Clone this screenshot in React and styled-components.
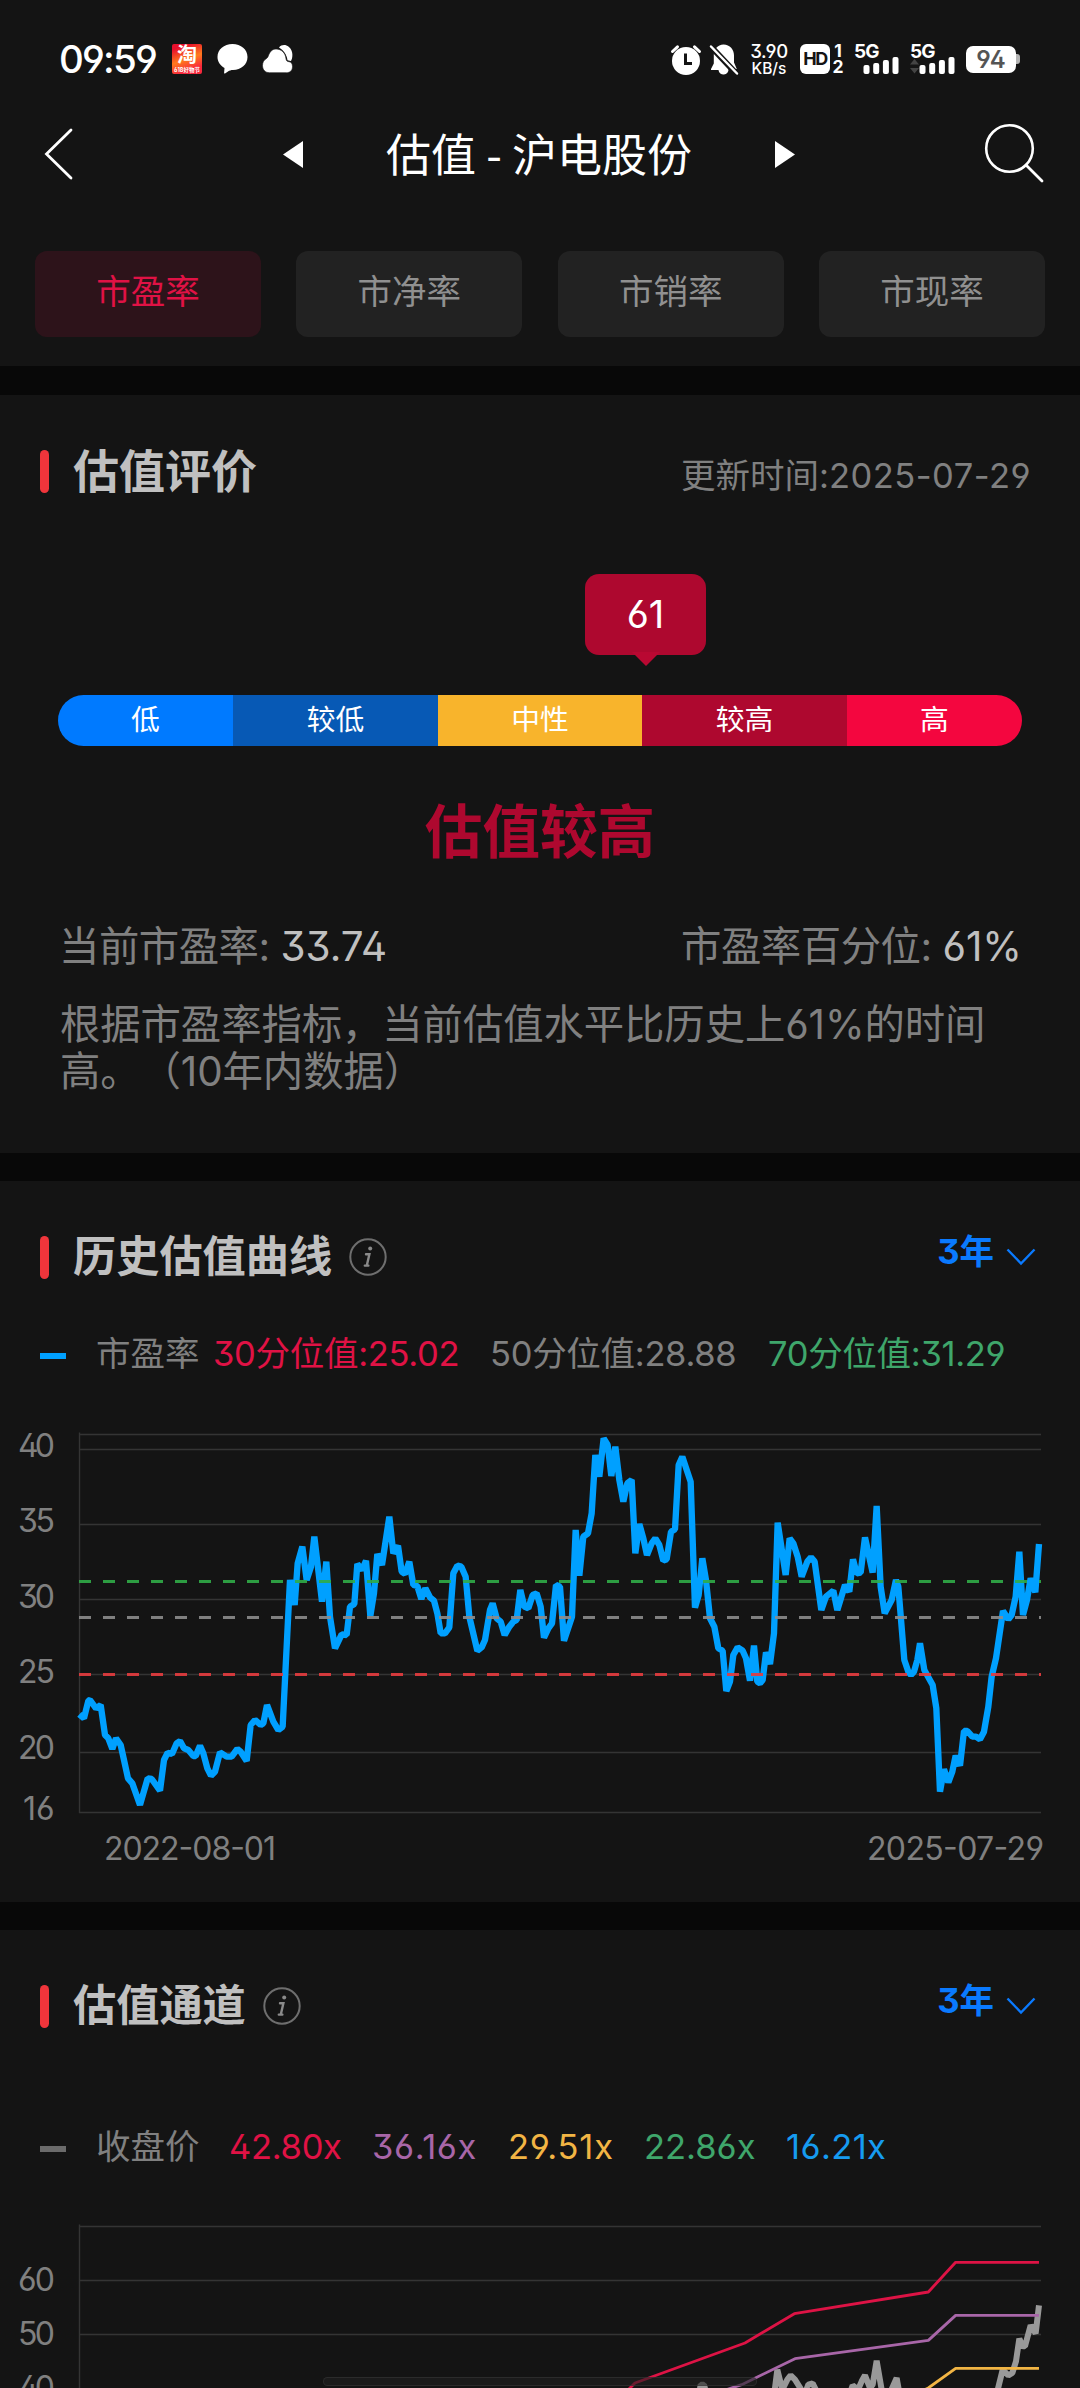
import React from "react";
import styled, { createGlobalStyle } from "styled-components";

const GlobalStyle = createGlobalStyle`
  * {
    box-sizing: border-box;
  }
  body {
    margin: 0;
    background: #141414;
    font-family: "Inter", "Noto Sans CJK SC", sans-serif;
    font-feature-settings: "ss01", "cv03", "cv04";
    text-spacing-trim: space-all;
  }
  svg {
    display: block;
    flex-shrink: 0;
    overflow: visible;
  }
`;

const tabs = ["市盈率", "市净率", "市销率", "市现率"];

const levels = [
  { name: "低", color: "#007aff", width: 175 },
  { name: "较低", color: "#0759b5", width: 205 },
  { name: "中性", color: "#f8b42c", width: 204 },
  { name: "较高", color: "#ae082f", width: 205 },
  { name: "高", color: "#f4063f", width: 175 },
];

const quantiles = [
  { text: "30分位值:25.02", color: "#e01245", width: 277 },
  { text: "50分位值:28.88", color: "#808080", width: 278 },
  { text: "70分位值:31.29", color: "#3fa66b", width: 240 },
];

const multiples = [
  { text: "42.80x", color: "#e01245", width: 143, spacing: -0.3 },
  { text: "36.16x", color: "#a866a8", width: 136, spacing: 0.6 },
  { text: "29.51x", color: "#f2b544", width: 136, spacing: 0.8 },
  { text: "22.86x", color: "#3fa66b", width: 142, spacing: 0 },
  { text: "16.21x", color: "#169bf0", width: 100, spacing: 0.4 },
];

// chart samples, three units to a pixel
const peTrend = `238,943 252,955 265,902 270,900 288,925 302,915 315,1005 325,1015 337,1047 348,1015 362,1035
372,1080 384,1135 397,1150 420,1215 443,1135 455,1137 480,1172 492,1080 503,1058 516,1062 530,1030 540,1023 552,1045
565,1050 580,1068 587,1068 600,1037 610,1060 622,1105 633,1127 645,1115 660,1057 680,1070 695,1070 712,1047 722,1055
740,1083 752,975 765,960 782,975 790,970 801,915 820,965 835,990 848,980 870,540 884,615 893,490 907,440 920,540
933,500 943,410 966,605 979,485 990,650 1005,745 1025,703 1040,705 1050,620 1063,612 1072,492 1086,510 1098,482
1111,648 1122,580 1132,462 1146,495 1168,350 1180,460 1194,437 1205,515 1215,522 1228,485 1240,555 1252,558
1264,597 1276,565 1290,592 1302,602 1312,640 1322,700 1335,700 1348,682 1360,520 1372,497 1384,500 1397,530
1408,650 1432,752 1445,742 1455,720 1470,630 1478,610 1490,655 1502,665 1514,705 1528,680 1540,665 1550,660
1561,570 1573,620 1585,625 1598,585 1610,580 1622,620 1632,713 1645,685 1656,670 1668,555 1680,560 1692,722
1716,650 1727,390 1738,527 1750,410 1764,400 1775,340 1786,165 1798,230 1811,115 1823,135 1834,228 1846,140
1858,240 1870,305 1882,250 1895,240 1906,460 1918,372 1930,415 1941,465 1955,430 1966,415 1978,435 1990,482
2000,478 2013,395 2025,388 2036,195 2047,170 2072,245 2085,623 2096,585 2107,475 2118,540 2130,655 2143,680
2155,745 2168,752 2179,873 2190,845 2200,765 2213,742 2228,752 2238,775 2250,842 2262,737 2272,845 2280,850
2288,840 2298,757 2310,792 2322,700 2333,368 2357,525 2369,415 2380,430 2393,470 2405,530 2422,485 2433,472
2444,485 2464,630 2478,590 2500,572 2512,630 2535,555 2548,575 2559,478 2570,520 2582,518 2595,412 2618,518
2630,318 2642,560 2654,640 2675,600 2688,540 2695,560 2713,780 2725,815 2733,825 2742,815 2752,780 2760,730
2773,810 2798,855 2809,925 2820,1175 2832,1108 2845,1147 2857,1115 2867,1067 2880,1097 2892,993 2902,993
2917,1010 2928,1010 2940,1018 2952,995 2965,920 2975,830 2988,775 3009,633 3025,658 3035,645 3047,590 3058,455
3069,645 3081,600 3092,535 3106,577 3117,432`;

const closePrice = `1680,720 2080,720 2102,590 2112,590 2125,640 2320,640 2332,545 2347,605 2362,575 2372,562 2385,575
2402,602 2412,625 2425,590 2438,586 2450,610 2460,660 2540,640 2552,610 2558,592 2568,600 2575,603 2585,580
2595,562 2610,600 2618,590 2630,518 2645,605 2655,625 2670,615 2690,570 2700,625 2760,700 2980,660 2992,610
3008,545 3025,562 3037,555 3048,520 3058,452 3068,475 3075,475 3092,412 3107,436 3117,352`;

const bands = [
  { color: "#f2b544", points: "2700,640 2785,600 2867,541 3117,541" },
  {
    color: "#a866a8",
    points: "2140,618 2225,590 2260,573 2385,512 2785,457 2867,382 3117,382",
  },
  {
    color: "#dd1345",
    points: "1870,620 1905,585 2235,465 2383,377 2785,312 2867,223 3117,223",
  },
];

const Line = (props) => (
  <polyline
    transform="scale(0.33333)"
    fill="none"
    strokeLinejoin="bevel"
    {...props}
  />
);

const Grid = ({ rows, bottom }) => (
  <g stroke="#343434" strokeWidth="1.4">
    {rows.map((y) => (
      <line key={y} x1="79" x2="1041" y1={y} y2={y} />
    ))}
    <line x1="79.5" x2="79.5" y1={rows[0] - 2} y2={bottom} />
  </g>
);

const AxisLabel = ({ y, children }) => (
  <AxisText x="18" y={y + 11} textLength="37">
    {children}
  </AxisText>
);

const HistoryChart = () => (
  <svg width="1080" height="500">
    <Grid rows={[34.5, 49.5, 124.5, 199.5, 274.5, 352.5, 412.5]} bottom={413} />
    <AxisLabel y={46}>40</AxisLabel>
    <AxisLabel y={121}>35</AxisLabel>
    <AxisLabel y={197}>30</AxisLabel>
    <AxisLabel y={272}>25</AxisLabel>
    <AxisLabel y={348}>20</AxisLabel>
    <AxisText x="23" y="420" textLength="31.5">
      16
    </AxisText>
    <Line points={peTrend} stroke="#00a0ff" strokeWidth="19" />
    <g strokeWidth="3" strokeDasharray="12 12" opacity="0.9">
      <line x1="79" x2="1041" y1="181.5" y2="181.5" stroke="#30ac48" />
      <line x1="79" x2="1041" y1="217.5" y2="217.5" stroke="#8c8c8c" />
      <line x1="79" x2="1041" y1="274.5" y2="274.5" stroke="#e63c3f" />
    </g>
    <AxisText x="104" y="460" textLength="172">
      2022-08-01
    </AxisText>
    <AxisText x="867" y="460" textLength="177">
      2025-07-29
    </AxisText>
  </svg>
);

const ChannelChart = () => (
  <svg width="1080" height="200">
    <Grid rows={[38.5, 92.5, 146.5]} bottom={200} />
    <AxisLabel y={92}>60</AxisLabel>
    <AxisLabel y={146}>50</AxisLabel>
    <AxisLabel y={200}>40</AxisLabel>
    <Line points={closePrice} stroke="#999999" strokeWidth="18" />
    {bands.map((band) => (
      <Line
        key={band.color}
        points={band.points}
        stroke={band.color}
        strokeWidth="8.5"
      />
    ))}
  </svg>
);

const InfoIcon = () => (
  <svg width="38" height="40" viewBox="0 0 38 40" fill="none">
    <circle cx="19" cy="19" r="17.7" stroke="#6e6e6e" strokeWidth="2" />
    <circle cx="21.2" cy="10.6" r="2" fill="#8a8a8a" />
    <path
      d="M17 16.2h3.4l-2.6 11.2M15.8 27.6h3.6"
      stroke="#8a8a8a"
      strokeWidth="2.4"
      strokeLinecap="round"
    />
  </svg>
);

const SectionHead = ({ title, size, info, children }) => (
  <Head>
    <HeadMark />
    <HeadTitle $size={size}>{title}</HeadTitle>
    {info && <InfoIcon />}
    {children}
  </Head>
);

const Period = () => (
  <PeriodBox>
    <span>3年</span>
    <svg width="30" height="20" viewBox="0 0 30 20" fill="none">
      <path d="M1.5 1.5 15 15.5 28.5 1.5" stroke="#0a7aff" strokeWidth="2.4" />
    </svg>
  </PeriodBox>
);

const Signal = ({ arrows }) => (
  <svg width="46" height="32" viewBox="0 0 46 32">
    <SignalText x="0" y="15">
      5G
    </SignalText>
    {arrows && (
      <path d="M0 21.5 4.5 16l4.5 5.5zM0 25l4.5 5.5L9 25z" fill="#444" />
    )}
    <g fill="#fff">
      <rect x="9.5" y="22" width="6" height="9" rx="2" />
      <rect x="19.2" y="20" width="6" height="11" rx="2" />
      <rect x="28.9" y="17" width="6" height="14" rx="2" />
      <rect x="38.5" y="14" width="6" height="17" rx="2" />
    </g>
  </svg>
);

const StatusIcons = () => (
  <React.Fragment>
    <svg width="30" height="31" viewBox="0 0 30 31">
      <circle cx="15" cy="17" r="14" fill="#fff" />
      <path
        d="M1.5 7.5 6.5 2.8M23.5 2.8l5 4.7"
        stroke="#fff"
        strokeWidth="3"
        strokeLinecap="round"
      />
      <path d="M14.5 9.5v10h6.5" stroke="#141414" strokeWidth="3" fill="none" />
    </svg>
    <svg width="28" height="31" viewBox="0 0 28 31">
      <path
        d="M13.5 0.5C20 0.5 24 5.5 24 11.5v7l2.8 6.5H18.5a5 5 0 0 1-10 1H1v-1l2.8-5.500v-8C3.8 5.5 7.5.5 13.5.5z"
        fill="#fff"
      />
      <path d="M-1 0.5 28 31.5" stroke="#141414" strokeWidth="6" />
      <path
        d="M1 2.5 27 29.5"
        stroke="#fff"
        strokeWidth="2.5"
        strokeLinecap="round"
      />
    </svg>
  </React.Fragment>
);

const App = () => {
  return (
    <React.Fragment>
      <GlobalStyle />
      <Page>
        <Header>
          <StatusBar>
            <Clock>09:59</Clock>
            <Promo>
              <PromoText>淘</PromoText>
              <PromoTag>618好物节</PromoTag>
            </Promo>
            <svg width="31" height="30" viewBox="0 0 31 30">
              <path
                d="M15.5 0C24 0 30.5 5.5 30.5 13S24 26 16 26c-2 0-3.5.5-5 1.5L8 29.5c-.8.3-1 0-.9-.7L7.5 24C3 21.5.5 17.5.5 13 .5 5.5 7 0 15.5 0z"
                fill="#fff"
              />
            </svg>
            <CloudIcon width="31" height="30" viewBox="0 0 31 30">
              <path
                d="M17 3.5C19 1 22 .5 24.5 1.5c4.5 1.7 7 7 5.5 13l-1 2.5-3.5-.8C24.8 11 22 6.5 17 3.5z"
                fill="#fff"
              />
              <path
                d="M14 5c5.5 0 9.5 4 10 9.8.2 2 1.2 2.7 3 2.9 2.5.3 3.5 2.3 3.5 5 0 3.5-2.2 6-6 6H7.5C3 28.7.5 25.5.5 21.5c0-3.5 1.500-5.500 4-7 1-.7 1.500-1.700 2-3C7.800 8 10 5 14 5z"
                fill="#fff"
                stroke="#141414"
                strokeWidth="0.6"
              />
            </CloudIcon>
            <StatusRight>
              <StatusIcons />
              <Speed>
                <SpeedValue>3.90</SpeedValue>
                <SpeedUnit>KB/s</SpeedUnit>
              </Speed>
              <HdBadge>HD</HdBadge>
              <SimNumbers>
                <span>1</span>
                <span>2</span>
              </SimNumbers>
              <Signal />
              <SecondSignal>
                <Signal arrows />
              </SecondSignal>
              <Battery>94</Battery>
              <BatteryTip />
            </StatusRight>
          </StatusBar>

          <NavBar>
            <svg width="30" height="54" viewBox="0 0 30 54" fill="none">
              <path
                d="M27 3 2.5 27 27 51"
                stroke="#fff"
                strokeWidth="2.8"
                strokeLinecap="round"
              />
            </svg>
            <NavTitle>
              <svg width="20" height="27" viewBox="0 0 20 27">
                <path d="M20 0v27L0 13.5z" fill="#fff" />
              </svg>
              <h1>估值 - 沪电股份</h1>
              <svg width="20" height="27" viewBox="0 0 20 27">
                <path d="M0 0v27l20-13.5z" fill="#fff" />
              </svg>
            </NavTitle>
            <svg width="60" height="62" viewBox="0 0 60 62" fill="none">
              <circle cx="25.5" cy="25.5" r="23.3" stroke="#fff" strokeWidth="2.6" />
              <path
                d="M42 42 58 58"
                stroke="#fff"
                strokeWidth="2.8"
                strokeLinecap="round"
              />
            </svg>
          </NavBar>

          <TabList>
            {tabs.map((tab, idx) => (
              <Tab key={tab} $active={idx === 0}>
                {tab}
              </Tab>
            ))}
          </TabList>
        </Header>

        <Section $height={758}>
          <SectionHead title="估值评价" size={46}>
            <UpdateTime>
              更新时间:<DateText>2025-07-29</DateText>
            </UpdateTime>
          </SectionHead>
          <Bubble>61</Bubble>
          <LevelBar>
            {levels.map((level) => (
              <Level key={level.name} $color={level.color} $width={level.width}>
                {level.name}
              </Level>
            ))}
          </LevelBar>
          <Verdict>估值较高</Verdict>
          <Stats>
            <span>
              当前市盈率: <StatValue>33.74</StatValue>
            </span>
            <span>
              市盈率百分位: <StatValue>61%</StatValue>
            </span>
          </Stats>
          <Summary>
            根据市盈率指标，当前估值水平比历史上61%的时间
            <br />
            高。（10年内数据）
          </Summary>
        </Section>

        <Section $height={721}>
          <SectionHead title="历史估值曲线" size={43.2} info>
            <Period />
          </SectionHead>
          <Legend $top={55}>
            <LegendDash $color="#00a0ff" />
            <LegendItem $color="#808080" $width={117}>
              市盈率
            </LegendItem>
            {quantiles.map((item) => (
              <LegendItem
                key={item.text}
                $color={item.color}
                $width={item.width}
                $spacing={-0.3}
              >
                {item.text}
              </LegendItem>
            ))}
          </Legend>
          <ChartBox $top={26}>
            <HistoryChart />
          </ChartBox>
        </Section>

        <Section $height={458}>
          <SectionHead title="估值通道" size={43.2} info>
            <Period />
          </SectionHead>
          <Legend $top={99}>
            <LegendDash $color="#6b6b6b" />
            <LegendItem $color="#808080" $width={133}>
              收盘价
            </LegendItem>
            {multiples.map((item) => (
              <LegendItem
                key={item.text}
                $color={item.color}
                $width={item.width}
                $spacing={item.spacing}
              >
                {item.text}
              </LegendItem>
            ))}
          </Legend>
          <ChartBox $top={21}>
            <ChannelChart />
          </ChartBox>
        </Section>
        <GestureBar />
      </Page>
    </React.Fragment>
  );
};

const Page = styled.div`
  position: relative;
  display: flex;
  flex-direction: column;
  width: 1080px;
  height: 2388px;
  overflow: hidden;
  background: #080808;
`;

const Header = styled.header`
  height: 366px;
  flex-shrink: 0;
  background: #141414;
`;

const StatusBar = styled.div`
  display: flex;
  align-items: center;
  height: 118px;
  padding: 0 60px 0 59px;
  color: #fff;
`;

const Clock = styled.span`
  width: 113px;
  font-size: 38.5px;
  font-weight: 500;
  letter-spacing: -1.8px;
`;

const Promo = styled.div`
  display: flex;
  flex-direction: column;
  align-items: center;
  width: 30px;
  height: 30px;
  margin-right: 15px;
  border-radius: 2px;
  overflow: hidden;
  background: linear-gradient(160deg, #e8102c 15%, #ff7a1c 50%, #f8283c 80%);
`;

const PromoText = styled.span`
  height: 23px;
  font-size: 20px;
  font-weight: 700;
  line-height: 23px;
`;

const PromoTag = styled.span`
  font-size: 5.5px;
  font-weight: 700;
  line-height: 6px;
  white-space: nowrap;
`;

const CloudIcon = styled.svg`
  margin-left: 14px;
`;

const StatusRight = styled.div`
  display: flex;
  align-items: center;
  margin-left: auto;

  > svg + svg {
    margin-left: 9px;
  }
`;

const Speed = styled.div`
  display: flex;
  flex-direction: column;
  align-items: center;
  width: 40px;
  height: 32px;
  margin-left: 11px;
  font-weight: 500;
`;

const SpeedValue = styled.span`
  font-size: 18.5px;
  line-height: 17px;
  letter-spacing: -0.3px;
`;

const SpeedUnit = styled.span`
  font-size: 15.5px;
  line-height: 17px;
`;

const HdBadge = styled.div`
  width: 30px;
  height: 30px;
  margin-left: 11px;
  border-radius: 6px;
  background: #fff;
  color: #141414;
  font-size: 18px;
  font-weight: 700;
  line-height: 30px;
  letter-spacing: -1.5px;
  text-align: center;
`;

const SimNumbers = styled.div`
  display: flex;
  flex-direction: column;
  width: 12px;
  margin-left: 2px;
  margin-right: 10px;
  font-size: 17.5px;
  font-weight: 700;
  line-height: 16.5px;
  text-align: center;
`;

const SecondSignal = styled.div`
  margin-left: 10px;
`;

const SignalText = styled.text`
  fill: #fff;
  font-size: 19px;
  font-weight: 700;
  letter-spacing: -1px;
`;

const Battery = styled.div`
  width: 50px;
  height: 27px;
  margin-left: 10px;
  border-radius: 7px;
  background: #fff;
  color: #555;
  font-size: 24px;
  font-weight: 600;
  line-height: 28px;
  text-align: center;
`;

const BatteryTip = styled.div`
  width: 4px;
  height: 10px;
  border-radius: 0 3px 3px 0;
  background: #b5b5b5;
`;

const NavBar = styled.nav`
  display: flex;
  align-items: center;
  justify-content: space-between;
  height: 72px;
  padding: 0 36px 0 44px;
`;

const NavTitle = styled.div`
  display: flex;
  align-items: center;
  justify-content: space-between;
  width: 512px;
  margin-left: 20px;

  h1 {
    margin: 0;
    padding-bottom: 2px;
    color: #fff;
    font-family: "Noto Sans CJK SC", sans-serif;
    font-size: 45px;
    font-weight: 400;
    line-height: 60px;
  }
`;

const TabList = styled.div`
  display: grid;
  grid-template-columns: repeat(4, 226px);
  justify-content: space-between;
  margin: 61px 35px 0;
`;

const Tab = styled.button`
  height: 86px;
  padding: 0 0 4px;
  border: 0;
  border-radius: 12px;
  background: ${(props) => (props.$active ? "#2d131a" : "#222222")};
  color: ${(props) => (props.$active ? "#e01245" : "#909090")};
  font-family: inherit;
  font-size: 34.5px;
  line-height: 40px;
`;

const Section = styled.section`
  display: flex;
  flex-direction: column;
  flex-shrink: 0;
  height: ${(props) => props.$height}px;
  padding-top: 55px;
  background: #141414;

  header + & {
    margin-top: 29px;
  }
  & + & {
    margin-top: 28px;
  }
`;

const Head = styled.div`
  display: flex;
  align-items: center;
  height: 43px;
  padding: 0 44px 0 40px;
`;

const HeadMark = styled.span`
  width: 9px;
  height: 43px;
  border-radius: 5px;
  background: #f0353b;
`;

const HeadTitle = styled.h2`
  margin: 0 17px 0 24px;
  padding-bottom: ${(props) => (props.$size < 45 ? 2 : 0)}px;
  color: #c0c0c0;
  font-size: ${(props) => props.$size}px;
  font-weight: 700;
  line-height: 43px;
`;

const UpdateTime = styled.span`
  margin-left: auto;
  padding-top: 8px;
  margin-right: 5px;
  color: #808080;
  font-size: 34.5px;
  line-height: 40px;
`;

const DateText = styled.span`
  letter-spacing: 0.5px;
`;

const PeriodBox = styled.div`
  display: flex;
  align-items: center;
  gap: 12px;
  margin-left: auto;
  color: #0a7aff;
  font-size: 34.5px;
  font-weight: 700;

  span {
    height: 52px;
    line-height: 40px;
  }
`;

const Bubble = styled.div`
  position: relative;
  width: 121px;
  height: 81px;
  margin: 81px 0 0 585px;
  border-radius: 14px;
  background: #ae082f;
  color: #fff;
  font-size: 38px;
  line-height: 80px;
  text-align: center;

  &::after {
    content: "";
    position: absolute;
    left: 47px;
    top: 78px;
    border: 14px solid transparent;
    border-top-color: #b90832;
    border-bottom: 0;
  }
`;

const LevelBar = styled.div`
  display: flex;
  height: 51px;
  margin: 40px 58px 0;
  border-radius: 26px;
  overflow: hidden;
`;

const Level = styled.span`
  width: ${(props) => props.$width}px;
  background: ${(props) => props.$color};
  color: #fff;
  font-size: 28.8px;
  line-height: 50px;
  text-align: center;
`;

const Verdict = styled.div`
  margin-top: 56px;
  color: #ae082f;
  font-size: 57.6px;
  font-weight: 700;
  line-height: 60px;
  text-align: center;
`;

const Stats = styled.div`
  display: flex;
  justify-content: space-between;
  margin: 61px 58px 0 59px;
  color: #808080;
  font-size: 40.4px;
  line-height: 48px;
  letter-spacing: -0.5px;
`;

const StatValue = styled.span`
  color: #c0c0c0;
  letter-spacing: 0;
`;

const Summary = styled.p`
  margin: 30px 0 0 60px;
  color: #808080;
  font-size: 40.4px;
  line-height: 47px;
  letter-spacing: -0.1px;
  white-space: nowrap;
`;

const Legend = styled.div`
  display: flex;
  align-items: center;
  height: 40px;
  margin-top: ${(props) => props.$top}px;
  padding-left: 40px;
`;

const LegendDash = styled.span`
  width: 26px;
  height: 6px;
  margin: 4px 30px 0 0;
  background: ${(props) => props.$color};
`;

const LegendItem = styled.span`
  flex: 0 0 ${(props) => props.$width}px;
  color: ${(props) => props.$color};
  font-size: 34.5px;
  line-height: 40px;
  letter-spacing: ${(props) => props.$spacing || 0}px;
  white-space: nowrap;
`;

const ChartBox = styled.div`
  margin-top: ${(props) => props.$top}px;
`;

const AxisText = styled.text`
  fill: #808080;
  font-size: 32px;
`;

const GestureBar = styled.div`
  position: absolute;
  left: 323px;
  bottom: 2px;
  width: 434px;
  height: 9px;
  border: 1px solid rgba(60, 60, 60, 0.5);
  border-radius: 5px;
  background: rgba(32, 32, 32, 0.6);
`;

export default App;
